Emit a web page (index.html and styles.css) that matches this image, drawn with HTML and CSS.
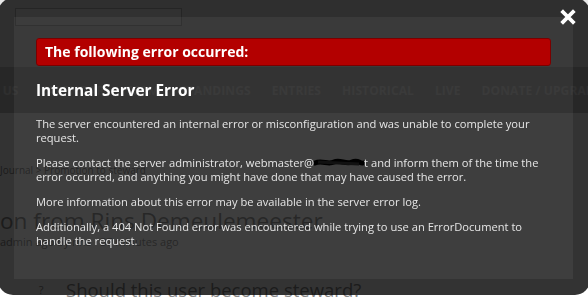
FILE: index.html
```html
<!DOCTYPE html>
<html>
<head>
<meta charset="utf-8">
<link rel="stylesheet" href="styles.css">
</head>
<body>
<div class="page">
  <header class="top">
    <div class="search"></div>
  </header>
  <nav class="nav">
    <span>ABOUT US</span>
    <span>CALENDAR</span>
    <span>TEAM</span>
    <span>STANDINGS</span>
    <span>ENTRIES</span>
    <span>HISTORICAL</span>
    <span>LIVE</span>
    <span>DONATE / UPGRADE</span>
  </nav>
  <main class="content">
    <div class="crumb">Journal &gt; Promotion to steward</div>
    <h1 class="title">on from Rins Demeulemeester</h1>
    <div class="meta">admin ago by rins &middot; 37 minutes ago</div>
    <div class="question"><span class="qicon">?</span>Should this user become steward?</div>
  </main>
</div>

<div class="overlay">
  <button class="close" aria-label="Close">
    <svg width="16" height="16" viewBox="0 0 16 16"><path d="M3 3 L13 13 M13 3 L3 13" stroke="#fff" stroke-width="3.8" stroke-linecap="square"/></svg>
  </button>
  <div class="panel">
    <div class="alert">The following error occurred:</div>
    <h2 class="err-title">Internal Server Error</h2>
    <p>The server encountered an internal error or misconfiguration and was unable to complete your request.</p>
    <p>Please contact the server administrator, webmaster@<span class="redact"><svg width="50" height="10" viewBox="0 0 50 10"><path d="M1 5 C8 2 14 7 20 4 S32 7 38 4 S46 6 49 5" stroke="#000" stroke-width="5" fill="none" stroke-linecap="round"/><path d="M4 4 L45 6" stroke="#111" stroke-width="3"/></svg></span>t and inform them of the time the error occurred, and anything you might have done that may have caused the error.</p>
    <p>More information about this error may be available in the server error log.</p>
    <p>Additionally, a 404 Not Found error was encountered while trying to use an ErrorDocument to handle the request.</p>
  </div>
</div>
</body>
</html>
```
FILE: styles.css
```css
html, body {
  margin: 0;
  padding: 0;
  background: #ffffff;
  font-family: "Open Sans", "Liberation Sans", sans-serif;
  overflow: hidden;
}

.page {
  width: 588px;
  height: 300px;
}

.top {
  height: 67px;
  background: #e8e8e8;
  padding: 8px 0 0 15px;
  box-sizing: border-box;
}

.search {
  width: 165px;
  height: 16px;
  border: 1px solid #bbb;
  background: #f4f4f4;
}

.nav {
  height: 46px;
  background: #c4c4c4;
  display: flex;
  align-items: center;
  gap: 21px;
  margin-left: -43px;
  white-space: nowrap;
  color: #e8e8e8;
  font-weight: 700;
  font-size: 12px;
  letter-spacing: 0.1px;
}

.content {
  color: #8a8a8a;
}

.crumb {
  font-size: 10px;
  padding: 50px 0 0 0;
  height: 14px;
}

.title {
  margin: 29px 0 0 0;
  font-weight: 400;
  font-size: 22.6px;
  line-height: 30px;
  white-space: nowrap;
}

.meta {
  font-size: 11px;
  margin-top: -2px;
}

.question {
  display: flex;
  align-items: center;
  gap: 18px;
  margin: 24px 0 0 34px;
  font-size: 18.5px;
  line-height: 33px;
  white-space: nowrap;
}

.qicon {
  width: 14px;
  height: 14px;
  font-size: 11px;
  text-align: center;
  line-height: 14px;
}

.overlay {
  position: fixed;
  left: -2px;
  top: -2px;
  width: 592px;
  height: 297px;
  box-sizing: border-box;
  padding: 19px 17px 16px 16px;
  border-radius: 15px;
  background: rgba(0, 0, 0, 0.8);
  display: flex;
}

.close {
  position: absolute;
  left: 562px;
  top: 11px;
  width: 16px;
  height: 16px;
  padding: 0;
  border: 0;
  background: none;
  display: block;
}

.close svg {
  display: block;
}

.panel {
  flex: 1;
  background: rgba(255, 255, 255, 0.05);
  padding: 21px 22px 0 22px;
  color: #e6e6e6;
  font-size: 11.15px;
  line-height: 14px;
}

.alert {
  height: 28px;
  box-sizing: border-box;
  background: #b30000;
  border: 1px solid #7a0000;
  border-radius: 3px;
  color: #ffffff;
  font-weight: 700;
  font-size: 14px;
  line-height: 26px;
  padding-left: 8px;
}

.err-title {
  margin: 15px 0 16px 0;
  font-size: 15.4px;
  line-height: 20px;
  font-weight: 700;
  color: #ffffff;
}

.panel p {
  margin: 0 0 11px 0;
}

.redact {
  display: inline-block;
  width: 50px;
  height: 10px;
  vertical-align: -1px;
}

.redact svg {
  display: block;
}
```
